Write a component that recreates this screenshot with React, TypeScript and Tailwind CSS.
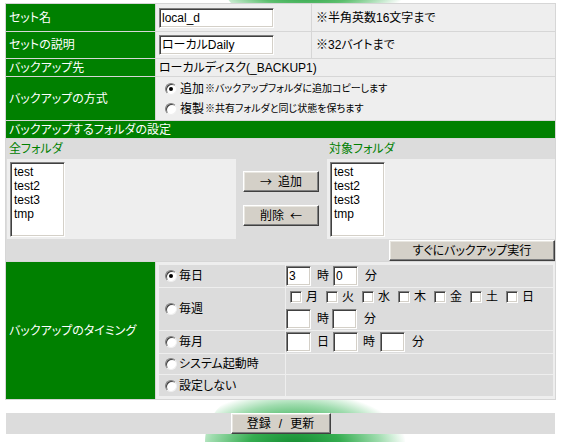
import React from 'react';

const font = "font-['Liberation_Sans','Noto_Sans_CJK_JP',sans-serif] [font-feature-settings:'palt'] leading-[14px]";
const btnCls =
  'bg-[#d4d0c8] text-black text-[12px] border border-t-white border-l-white border-r-[#404040] border-b-[#404040] shadow-[inset_-1px_-1px_0_#808080,inset_1px_1px_0_#e8e6e0] flex items-center justify-center leading-none';
const insetCls =
  'bg-white border border-t-[#808080] border-l-[#808080] border-r-white border-b-white shadow-[inset_1px_1px_0_#404040,inset_-1px_-1px_0_#d4d0c8]';
const cjk = "font-['Noto_Sans_CJK_JP',sans-serif]";

function TextBox({ value = '', w }: { value?: string; w: string }) {
  return (
    <div className={`${insetCls} ${w} h-[20px] flex items-center pl-[2px] text-[12px] text-black leading-none`}>
      {value}
    </div>
  );
}

function Radio({ checked = false }: { checked?: boolean }) {
  return (
    <span className="w-[12px] h-[12px] rounded-full bg-white border border-t-[#808080] border-l-[#808080] border-r-[#f0f0f0] border-b-[#f0f0f0] shadow-[inset_1px_1px_0_#404040] flex items-center justify-center shrink-0">
      {checked && <span className="w-[4px] h-[4px] rounded-full bg-black" />}
    </span>
  );
}

function Check() {
  return <span className={`${insetCls} w-[12px] h-[12px] shrink-0`} />;
}

function ListBox() {
  return (
    <div className={`${insetCls} w-[55px] h-[75px] pt-[2px] pl-[3px] text-[12px] leading-[14px] text-black`}>
      {['test', 'test2', 'test3', 'tmp'].map(n => (
        <div key={n}>{n}</div>
      ))}
    </div>
  );
}

const days = ['月', '火', '水', '木', '金', '土', '日'];

export default function App() {
  return (
    <div className={`relative w-[561px] h-[442px] bg-white overflow-hidden ${font}`}>
      {/* background splash */}
      <div className="absolute left-[225px] top-[-34px] w-[180px] h-[44px] rounded-full bg-[radial-gradient(ellipse_at_45%_60%,#1f9a3c_0%,#5cbf6e_35%,#c8ead0_60%,transparent_72%)]" />
      <div className="absolute left-[205px] top-[392px] w-[200px] h-[100px] rounded-full bg-[radial-gradient(ellipse_at_45%_55%,#138a30_0%,#34ad50_30%,#9fdcae_55%,transparent_72%)]" />

      <div className="relative ml-[5px] mt-[3px] w-[551px] p-px bg-[#d6d6d6] flex flex-col gap-px">
        {/* set name */}
        <div className="grid grid-cols-[149px_1fr] gap-px h-[27px]">
          <div className="bg-[#008000] text-white text-[12px] pl-[3px] flex items-center">セット名</div>
          <div className="grid grid-cols-[155px_1fr] gap-px">
            <div className="bg-[#eeeeee] pl-[3px] flex items-center">
              <TextBox value="local_d" w="w-[115px]" />
            </div>
            <div className="bg-[#eeeeee] pl-[4px] flex items-center text-[12px] text-black">※半角英数16文字まで</div>
          </div>
        </div>
        {/* description */}
        <div className="grid grid-cols-[149px_1fr] gap-px h-[26px]">
          <div className="bg-[#008000] text-white text-[12px] pl-[3px] flex items-center">セットの説明</div>
          <div className="grid grid-cols-[155px_1fr] gap-px">
            <div className="bg-[#eeeeee] pl-[3px] flex items-center">
              <TextBox value="ローカルDaily" w="w-[115px]" />
            </div>
            <div className="bg-[#eeeeee] pl-[4px] flex items-center text-[12px] text-black">※32バイトまで</div>
          </div>
        </div>
        {/* destination */}
        <div className="grid grid-cols-[149px_1fr] gap-px h-[17px]">
          <div className="bg-[#008000] text-white text-[12px] pl-[3px] flex items-center">バックアップ先</div>
          <div className="bg-[#eeeeee] pl-[3px] flex items-center text-[12px] text-black">ローカルディスク(_BACKUP1)</div>
        </div>
        {/* method */}
        <div className="grid grid-cols-[149px_1fr] gap-px h-[43px]">
          <div className="bg-[#008000] text-white text-[12px] pl-[3px] flex items-center">バックアップの方式</div>
          <div className="bg-[#eeeeee] pl-[9px] flex flex-col justify-center gap-[6px] text-black">
            <div className="flex items-center gap-[3px] h-[14px]">
              <Radio checked />
              <span className="text-[12px]">追加</span>
              <span className="text-[10px] -ml-[2px]">※バックアップフォルダに追加コピーします</span>
            </div>
            <div className="flex items-center gap-[3px] h-[14px]">
              <Radio />
              <span className="text-[12px]">複製</span>
              <span className="text-[10px] -ml-[2px]">※共有フォルダと同じ状態を保ちます</span>
            </div>
          </div>
        </div>
        {/* folders header */}
        <div className="bg-[#008000] text-white text-[12px] pl-[3px] h-[17px] flex items-center">
          バックアップするフォルダの設定
        </div>
        {/* folders */}
        <div className="bg-[#dcdcdc] grid grid-cols-[230px_91px_1fr] grid-rows-[20px_80px_22px] text-[12px]">
          <div className="pl-[3px] flex items-center text-[#008000]">全フォルダ</div>
          <div />
          <div className="pl-[2px] flex items-center text-[#008000]">対象フォルダ</div>
          <div className="ml-px bg-[#eeeeee] p-[3px]">
            <ListBox />
          </div>
          <div className="flex flex-col items-start pl-[7px] pt-[12px] gap-[13px]">
            <div className={`${btnCls} w-[76px] h-[21px]`}>
              <span className={cjk}>→</span>
              <span className="ml-[6px]">追加</span>
            </div>
            <div className={`${btnCls} w-[76px] h-[21px]`}>
              <span className="mr-[6px]">削除</span>
              <span className={cjk}>←</span>
            </div>
          </div>
          <div className="bg-[#eeeeee] p-[3px]">
            <ListBox />
          </div>
          <div className="col-span-3 flex justify-end items-end">
            <div className={`${btnCls} w-[166px] h-[21px]`}>すぐにバックアップ実行</div>
          </div>
        </div>
        {/* timing */}
        <div className="grid grid-cols-[149px_1fr] gap-px">
          <div className="bg-[#008000] text-white text-[12px] pl-[3px] flex items-center">バックアップのタイミング</div>
          <div className="bg-[#eeeeee] py-[3px] pl-[3px] pr-[2px]">
            <div className="bg-[#eeeeee] grid grid-cols-[126px_1fr] gap-px text-[12px] text-black">
              <div className="bg-[#dcdcdc] h-[22px] pl-[6px] flex items-center gap-[2px]">
                <Radio checked />
                <span>毎日</span>
              </div>
              <div className="bg-[#dcdcdc] flex items-center">
                <TextBox value="3" w="w-[25px]" />
                <span className="ml-[6px]">時</span>
                <span className="ml-[4px]"><TextBox value="0" w="w-[25px]" /></span>
                <span className="ml-[7px]">分</span>
              </div>

              <div className="bg-[#dcdcdc] h-[42px] pl-[6px] flex items-center gap-[2px]">
                <Radio />
                <span>毎週</span>
              </div>
              <div className="bg-[#dcdcdc] flex flex-col justify-center gap-[4px]">
                <div className="flex items-center pl-[4px] h-[16px]">
                  {days.map(d => (
                    <span key={d} className="flex items-center mr-[8px]">
                      <Check />
                      <span className="ml-[4px]">{d}</span>
                    </span>
                  ))}
                </div>
                <div className="flex items-center">
                  <TextBox w="w-[25px]" />
                  <span className="ml-[6px]">時</span>
                  <span className="ml-[3px]"><TextBox w="w-[25px]" /></span>
                  <span className="ml-[7px]">分</span>
                </div>
              </div>

              <div className="bg-[#dcdcdc] h-[22px] pl-[6px] flex items-center gap-[2px]">
                <Radio />
                <span>毎月</span>
              </div>
              <div className="bg-[#dcdcdc] flex items-center">
                <TextBox w="w-[25px]" />
                <span className="ml-[6px]">日</span>
                <span className="ml-[4px]"><TextBox w="w-[25px]" /></span>
                <span className="ml-[5px]">時</span>
                <span className="ml-[5px]"><TextBox w="w-[25px]" /></span>
                <span className="ml-[7px]">分</span>
              </div>

              <div className="bg-[#dcdcdc] h-[20px] pl-[6px] flex items-center gap-[2px]">
                <Radio />
                <span>システム起動時</span>
              </div>
              <div className="bg-[#dcdcdc]" />

              <div className="bg-[#dcdcdc] h-[21px] pl-[6px] flex items-center gap-[2px]">
                <Radio />
                <span>設定しない</span>
              </div>
              <div className="bg-[#dcdcdc]" />
            </div>
          </div>
        </div>
      </div>

      {/* submit bar */}
      <div className="relative ml-[6px] mt-[13px] w-[549px] h-[21px] bg-[#dcdcdc] flex justify-center">
        <div className={`${btnCls} w-[100px] h-[21px]`}>
          <span>登録</span>
          <span className="mx-[8px]">/</span>
          <span>更新</span>
        </div>
      </div>
    </div>
  );
}
